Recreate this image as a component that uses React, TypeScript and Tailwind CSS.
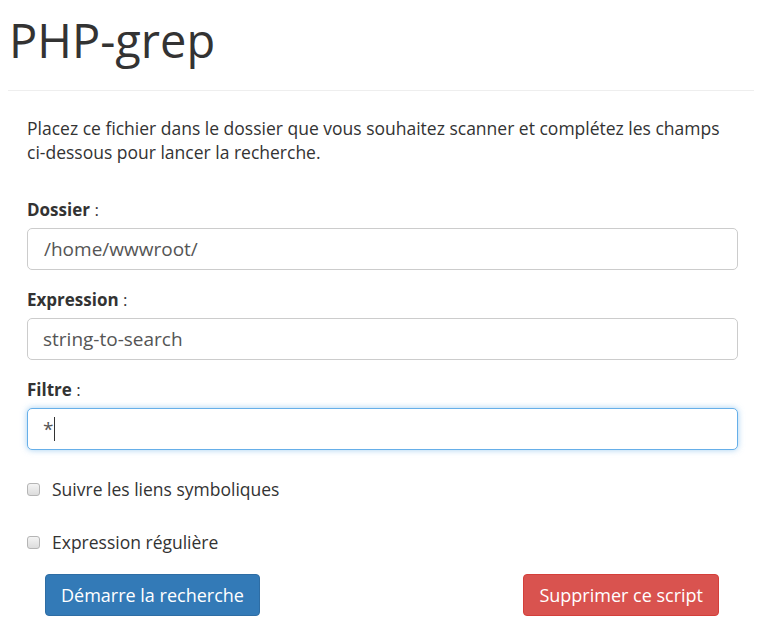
import React from 'react';

const Checkbox: React.FC<{ label: string }> = ({ label }) => (
    <label className="flex items-center h-6">
        <span className="w-[13px] h-[13px] rounded-[3px] border border-[#b5b5b5] bg-gradient-to-b from-[#f4f4f4] to-[#dcdcdc] shrink-0" />
        <span className="ml-[12px] text-[17.5px] text-[#333]">{label}</span>
    </label>
);

const Field: React.FC<{ label: string; value: string; focused?: boolean; pad?: string }> = ({ label, value, focused, pad }) => (
    <div className="flex flex-col">
        <div className="text-[17px] text-[#333] h-[24px] leading-[24px]">
            <span className="font-bold">{label}</span> :
        </div>
        <div
            className={`mt-[6px] h-[42px] w-[711px] rounded-[5px] border bg-white flex items-center text-[19px] text-[#555] ${
                focused
                    ? 'border-[#66afe9] shadow-[0_0_6px_rgba(102,175,233,0.6)]'
                    : 'border-[#ccc]'
            } ${pad ?? 'pl-[15px]'}`}
        >
            {value}
            {focused && <span className="ml-[1px] w-px h-[24px] bg-[#333]" />}
        </div>
    </div>
);

export default function App() {
    return (
        <div className="w-[762px] h-[624px] bg-white overflow-hidden" style={{ fontFamily: '"Open Sans", sans-serif' }}>
            <h1 className="pl-[9px] pt-[12px] text-[47px] leading-[56px] text-[#333] font-normal">PHP-grep</h1>
            <div className="mt-[22px] mx-[8px] h-px bg-[#eee]" />

            <div className="px-[27px]">
                <p className="mt-[25px] text-[17.5px] leading-[24px] text-[#333]">
                    Placez ce fichier dans le dossier que vous souhaitez scanner et complétez les champs ci-dessous pour lancer la recherche.
                </p>

                <div className="mt-[34px] flex flex-col gap-[18px]">
                    <Field label="Dossier" value="/home/wwwroot/" pad="pl-[16px]" />
                    <Field label="Expression" value="string-to-search" />
                    <Field label="Filtre" value="*" focused />
                </div>

                <div className="mt-[27px] flex flex-col gap-[29px]">
                    <Checkbox label="Suivre les liens symboliques" />
                    <Checkbox label="Expression régulière" />
                </div>

                <div className="mt-[20px] flex justify-between pl-[18px] pr-[16px]">
                    <button className="h-[42px] px-[15px] rounded-[4px] bg-[#337ab7] border border-[#2e6da4] text-white text-[18px]">
                        Démarre la recherche
                    </button>
                    <button className="h-[42px] px-[15px] rounded-[4px] bg-[#d9534f] border border-[#d43f3a] text-white text-[18px]">
                        Supprimer ce script
                    </button>
                </div>
            </div>
        </div>
    );
}
